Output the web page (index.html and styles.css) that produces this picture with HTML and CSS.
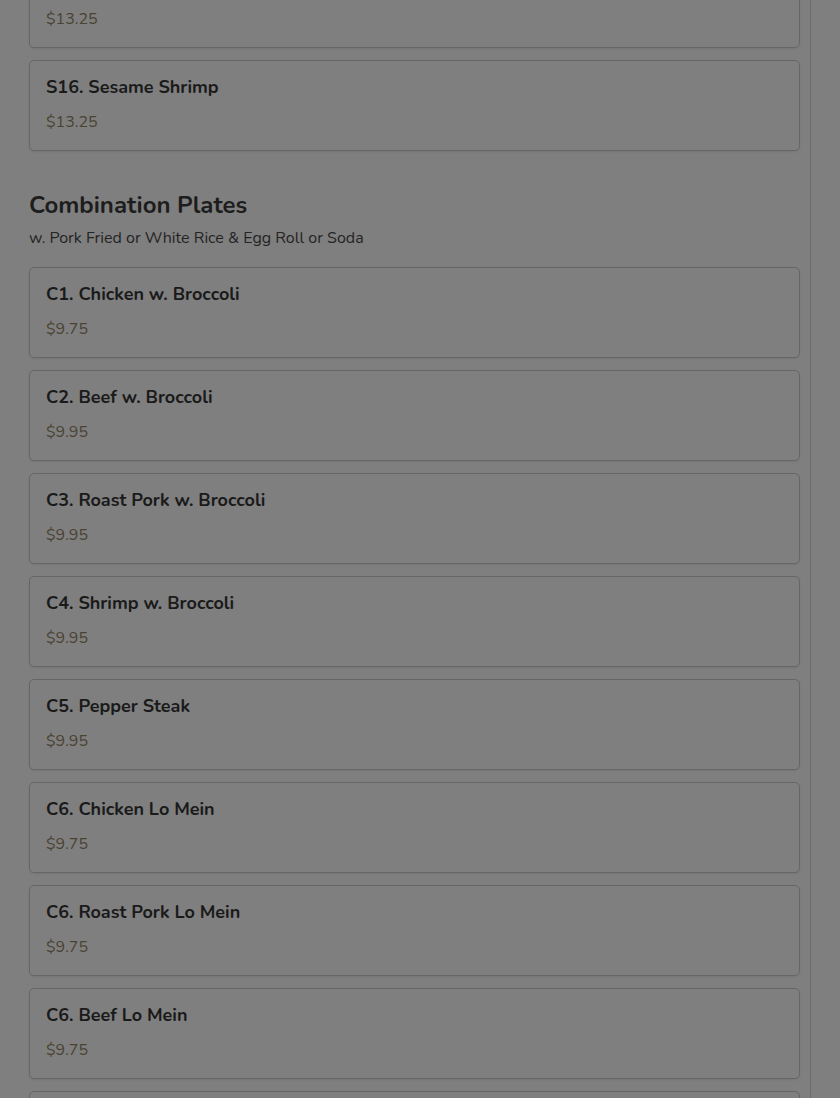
FILE: index.html
```html
<!DOCTYPE html>
<html lang="en">
<head>
<meta charset="utf-8">
<title>Menu</title>
<link rel="stylesheet" href="styles.css">
</head>
<body>
<div class="page">
  <section class="section section-first">
    <div class="card">
      <div class="item-name">S15. Shrimp w. Garlic Sauce</div>
      <div class="item-price">$13.25</div>
    </div>
    <div class="card">
      <div class="item-name">S16. Sesame Shrimp</div>
      <div class="item-price">$13.25</div>
    </div>
  </section>
  <section class="section">
    <h2 class="section-title">Combination Plates</h2>
    <p class="section-note">w. Pork Fried or White Rice &amp; Egg Roll or Soda</p>
    <div class="card">
      <div class="item-name">C1. Chicken w. Broccoli</div>
      <div class="item-price">$9.75</div>
    </div>
    <div class="card">
      <div class="item-name">C2. Beef w. Broccoli</div>
      <div class="item-price">$9.95</div>
    </div>
    <div class="card">
      <div class="item-name">C3. Roast Pork w. Broccoli</div>
      <div class="item-price">$9.95</div>
    </div>
    <div class="card">
      <div class="item-name">C4. Shrimp w. Broccoli</div>
      <div class="item-price">$9.95</div>
    </div>
    <div class="card">
      <div class="item-name">C5. Pepper Steak</div>
      <div class="item-price">$9.95</div>
    </div>
    <div class="card">
      <div class="item-name">C6. Chicken Lo Mein</div>
      <div class="item-price">$9.75</div>
    </div>
    <div class="card">
      <div class="item-name">C6. Roast Pork Lo Mein</div>
      <div class="item-price">$9.75</div>
    </div>
    <div class="card">
      <div class="item-name">C6. Beef Lo Mein</div>
      <div class="item-price">$9.75</div>
    </div>
    <div class="card">
      <div class="item-name">C6. Shrimp Lo Mein</div>
      <div class="item-price">$9.95</div>
    </div>
  </section>
</div>
</body>
</html>
```

FILE: styles.css
```css
html, body {
  margin: 0;
  padding: 0;
  background: #7f7f7f;
  height: 100%;
  overflow: hidden;
}

body {
  font-family: "Nunito", "Lato", "Open Sans", sans-serif;
  color: #1c1c1c;
}

.page {
  box-sizing: border-box;
  width: 811px;
  min-height: 100%;
  padding: 0 10px 0 29px;
  border-right: 1px solid #6c6c6c;
  margin-top: -43px;
}

.section {
  display: flex;
  flex-direction: column;
  gap: 12px;
}

.section + .section {
  margin-top: 38px;
}

.section-title {
  margin: 0;
  font-size: 24px;
  line-height: 32px;
  font-weight: 700;
  color: #1d1d1d;
}

.section-note {
  margin: -7px 0 5px;
  font-size: 16px;
  line-height: 24px;
  color: #242424;
}

.card {
  border: 1px solid #666666;
  border-radius: 5px;
  padding: 13px 16px 16px;
  display: flex;
  flex-direction: column;
  gap: 9px;
  box-shadow: 0 1px 2px rgba(0, 0, 0, 0.08);
}

.item-name {
  font-size: 18px;
  line-height: 27px;
  font-weight: 700;
  color: #1a1a1a;
}

.item-price {
  font-size: 16px;
  line-height: 24px;
  color: #4a4333;
}
```
